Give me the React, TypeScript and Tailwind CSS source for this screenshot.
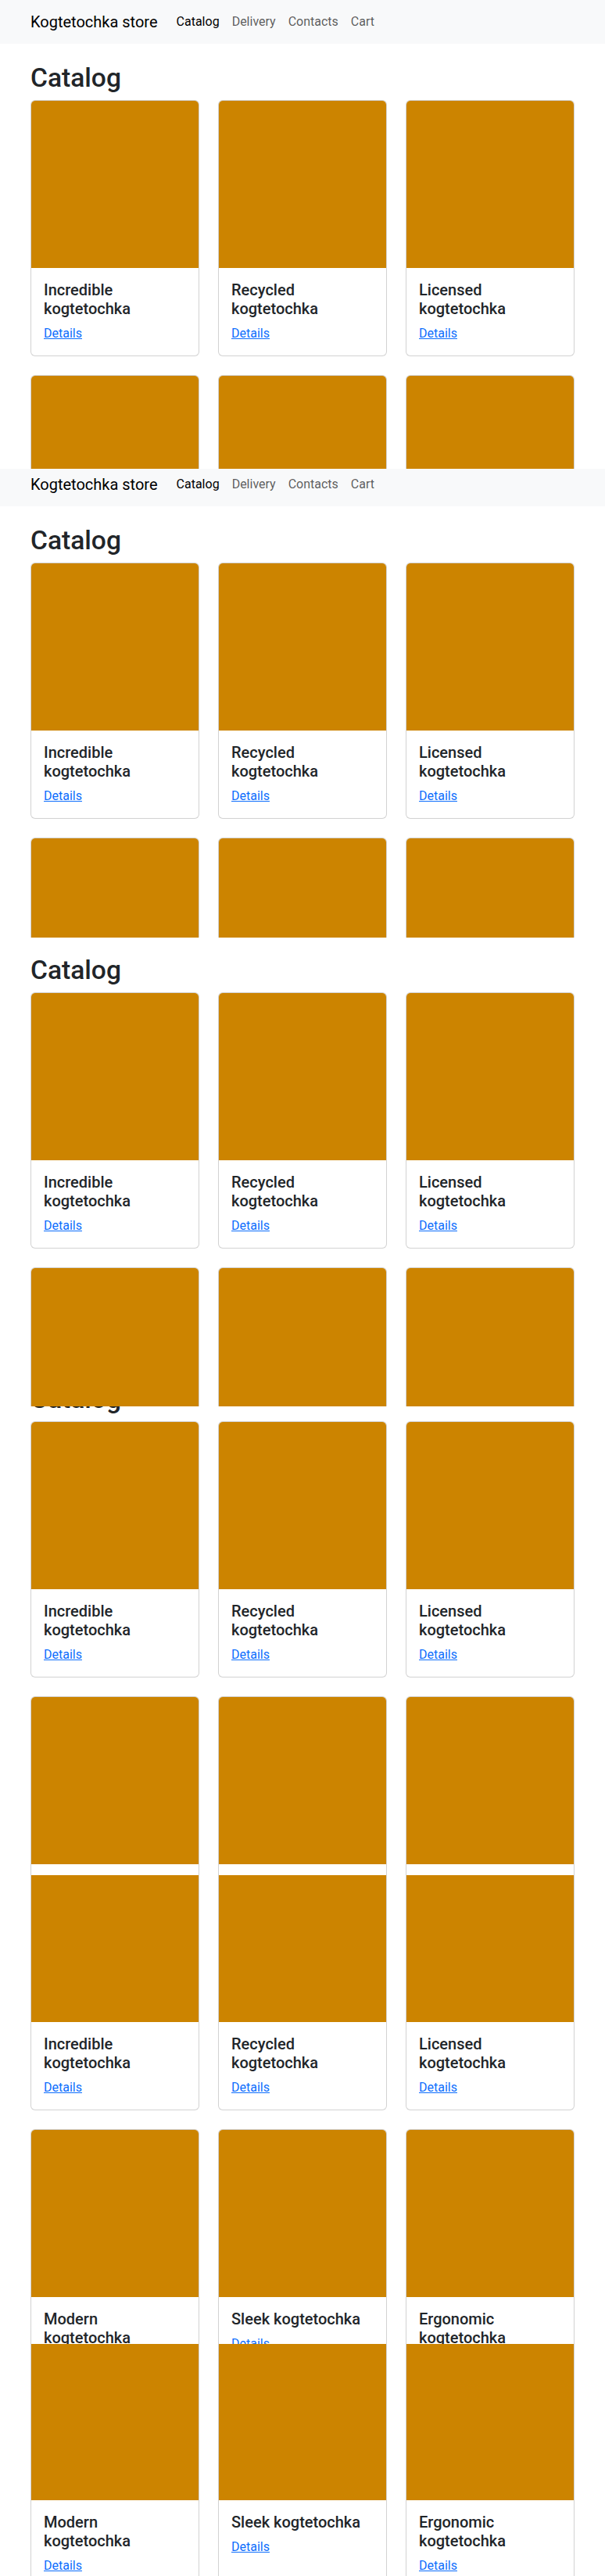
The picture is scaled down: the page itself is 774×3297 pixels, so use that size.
const products = [
  "Incredible kogtetochka",
  "Recycled kogtetochka",
  "Licensed kogtetochka",
  "Modern kogtetochka",
  "Sleek kogtetochka",
  "Ergonomic kogtetochka",
];

// the shot is stitched from six scroll windows
const slices = [
  { clip: "h-[600px]", shift: "mt-0" },
  { clip: "h-[600px]", shift: "-mt-[8px]" },
  { clip: "h-[600px]", shift: "-mt-[58px]" },
  { clip: "h-[600px]", shift: "-mt-[109px]" },
  { clip: "h-[600px]", shift: "-mt-[155px]" },
  { clip: "h-[297px]", shift: "-mt-[495px]" },
];

function ProductCard({ title }: { title: string }) {
  return (
    <div className="overflow-hidden rounded-[6px] border border-black/[0.175] bg-white">
      <div className="aspect-square bg-[#cc8400]" />
      <div className="p-4">
        <h5 className="mb-2 text-[20px] font-medium leading-[1.2]">{title}</h5>
        <a href="#" className="text-[#0d6efd] underline">
          Details
        </a>
      </div>
    </div>
  );
}

function Page() {
  return (
    <div className="bg-white font-['Roboto',sans-serif] text-base leading-6 text-[#212529]">
      <nav className="bg-[#f8f9fa] py-2">
        <div className="mx-auto flex w-[720px] items-center px-3">
          <span className="mr-4 py-[5px] text-[20px] leading-[30px] text-black">
            Kogtetochka store
          </span>
          <a href="#" className="px-2 py-2 text-black">Catalog</a>
          <a href="#" className="px-2 py-2 text-black/65">Delivery</a>
          <a href="#" className="px-2 py-2 text-black/65">Contacts</a>
          <a href="#" className="px-2 py-2 text-black/65">Cart</a>
        </div>
      </nav>
      <main className="mx-auto w-[720px] px-3 pb-12">
        <h1 className="mb-2 mt-6 text-[33.6px] font-medium leading-[1.2]">Catalog</h1>
        <div className="grid grid-cols-3 gap-6">
          {products.map((p) => (
            <ProductCard key={p} title={p} />
          ))}
        </div>
      </main>
    </div>
  );
}

export default function App() {
  return (
    <div className="w-[774px] bg-white">
      {slices.map((s, i) => (
        <div key={i} className={`overflow-hidden ${s.clip}`}>
          <div className={s.shift}>
            <Page />
          </div>
        </div>
      ))}
    </div>
  );
}
